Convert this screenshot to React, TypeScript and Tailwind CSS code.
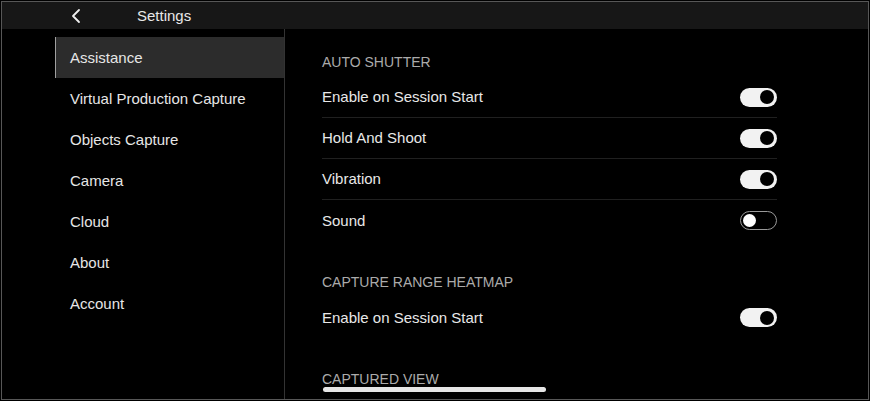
import { ChevronLeft } from "lucide-react";

const menu = [
  "Assistance",
  "Virtual Production Capture",
  "Objects Capture",
  "Camera",
  "Cloud",
  "About",
  "Account",
];

function Toggle({ on }: { on: boolean }) {
  if (on) {
    return (
      <div className="flex h-[19px] w-[37px] items-center justify-end rounded-full bg-[#f2f2f2] pr-[3px]">
        <div className="h-[14px] w-[14px] rounded-full bg-black" />
      </div>
    );
  }
  return (
    <div className="flex h-[19px] w-[37px] items-center rounded-full border border-[#9a9a9a] bg-black pl-[2px]">
      <div className="h-[13px] w-[13px] rounded-full bg-white" />
    </div>
  );
}

function Row({ label, on, last }: { label: string; on: boolean; last?: boolean }) {
  return (
    <div
      className={`flex h-[41px] w-[455px] items-center justify-between ${
        last ? "" : "border-b border-[#202020]"
      }`}
    >
      <span className="pt-px text-[15px] text-[#e8e8e8]">{label}</span>
      <Toggle on={on} />
    </div>
  );
}

function SectionTitle({ title, tall }: { title: string; tall?: boolean }) {
  return (
    <div className={`flex items-end pb-[5px] ${tall ? "h-[56px]" : "h-[48px]"}`}>
      <span className="text-[14px] leading-5 text-[#ababab]">{title}</span>
    </div>
  );
}

export default function App() {
  return (
    <div
      className="h-[401px] w-[870px] bg-black p-px"
      style={{ fontFamily: '"Liberation Sans", Arial, sans-serif' }}
    >
      <div className="relative flex h-full w-full flex-col overflow-hidden border border-[#575757] bg-black">
        {/* Top bar */}
        <div className="flex h-[27px] shrink-0 items-center bg-[#171717]">
          <ChevronLeft className="ml-[62px] h-[24px] w-[24px] text-[#f0f0f0]" strokeWidth={1.8} />
          <span className="ml-[49px] pt-px text-[15px] text-[#e8e8e8]">Settings</span>
        </div>

        <div className="flex min-h-0 flex-1">
          {/* Sidebar */}
          <div className="ml-[53px] w-[230px] shrink-0 border-r border-[#333] pt-[8px]">
            {menu.map((item, i) => (
              <div
                key={item}
                className={`flex h-[41px] items-center pl-[14px] pt-[2px] text-[15px] text-[#e6e6e6] ${
                  i === 0 ? "border-l border-[#a0a0a0] bg-[#2c2c2c]" : "border-l border-transparent"
                }`}
              >
                {item}
              </div>
            ))}
          </div>

          {/* Content */}
          <div className="pl-[37px]">
            <SectionTitle title="AUTO SHUTTER" />
            <Row label="Enable on Session Start" on />
            <Row label="Hold And Shoot" on />
            <Row label="Vibration" on />
            <Row label="Sound" on={false} last />

            <SectionTitle title="CAPTURE RANGE HEATMAP" tall />
            <Row label="Enable on Session Start" on last />

            <SectionTitle title="CAPTURED VIEW" tall />
          </div>
        </div>

        {/* Home indicator */}
        <div className="absolute bottom-[7px] left-[321px] h-[5px] w-[223px] rounded-full bg-[#e6e6e6]" />
      </div>
    </div>
  );
}
